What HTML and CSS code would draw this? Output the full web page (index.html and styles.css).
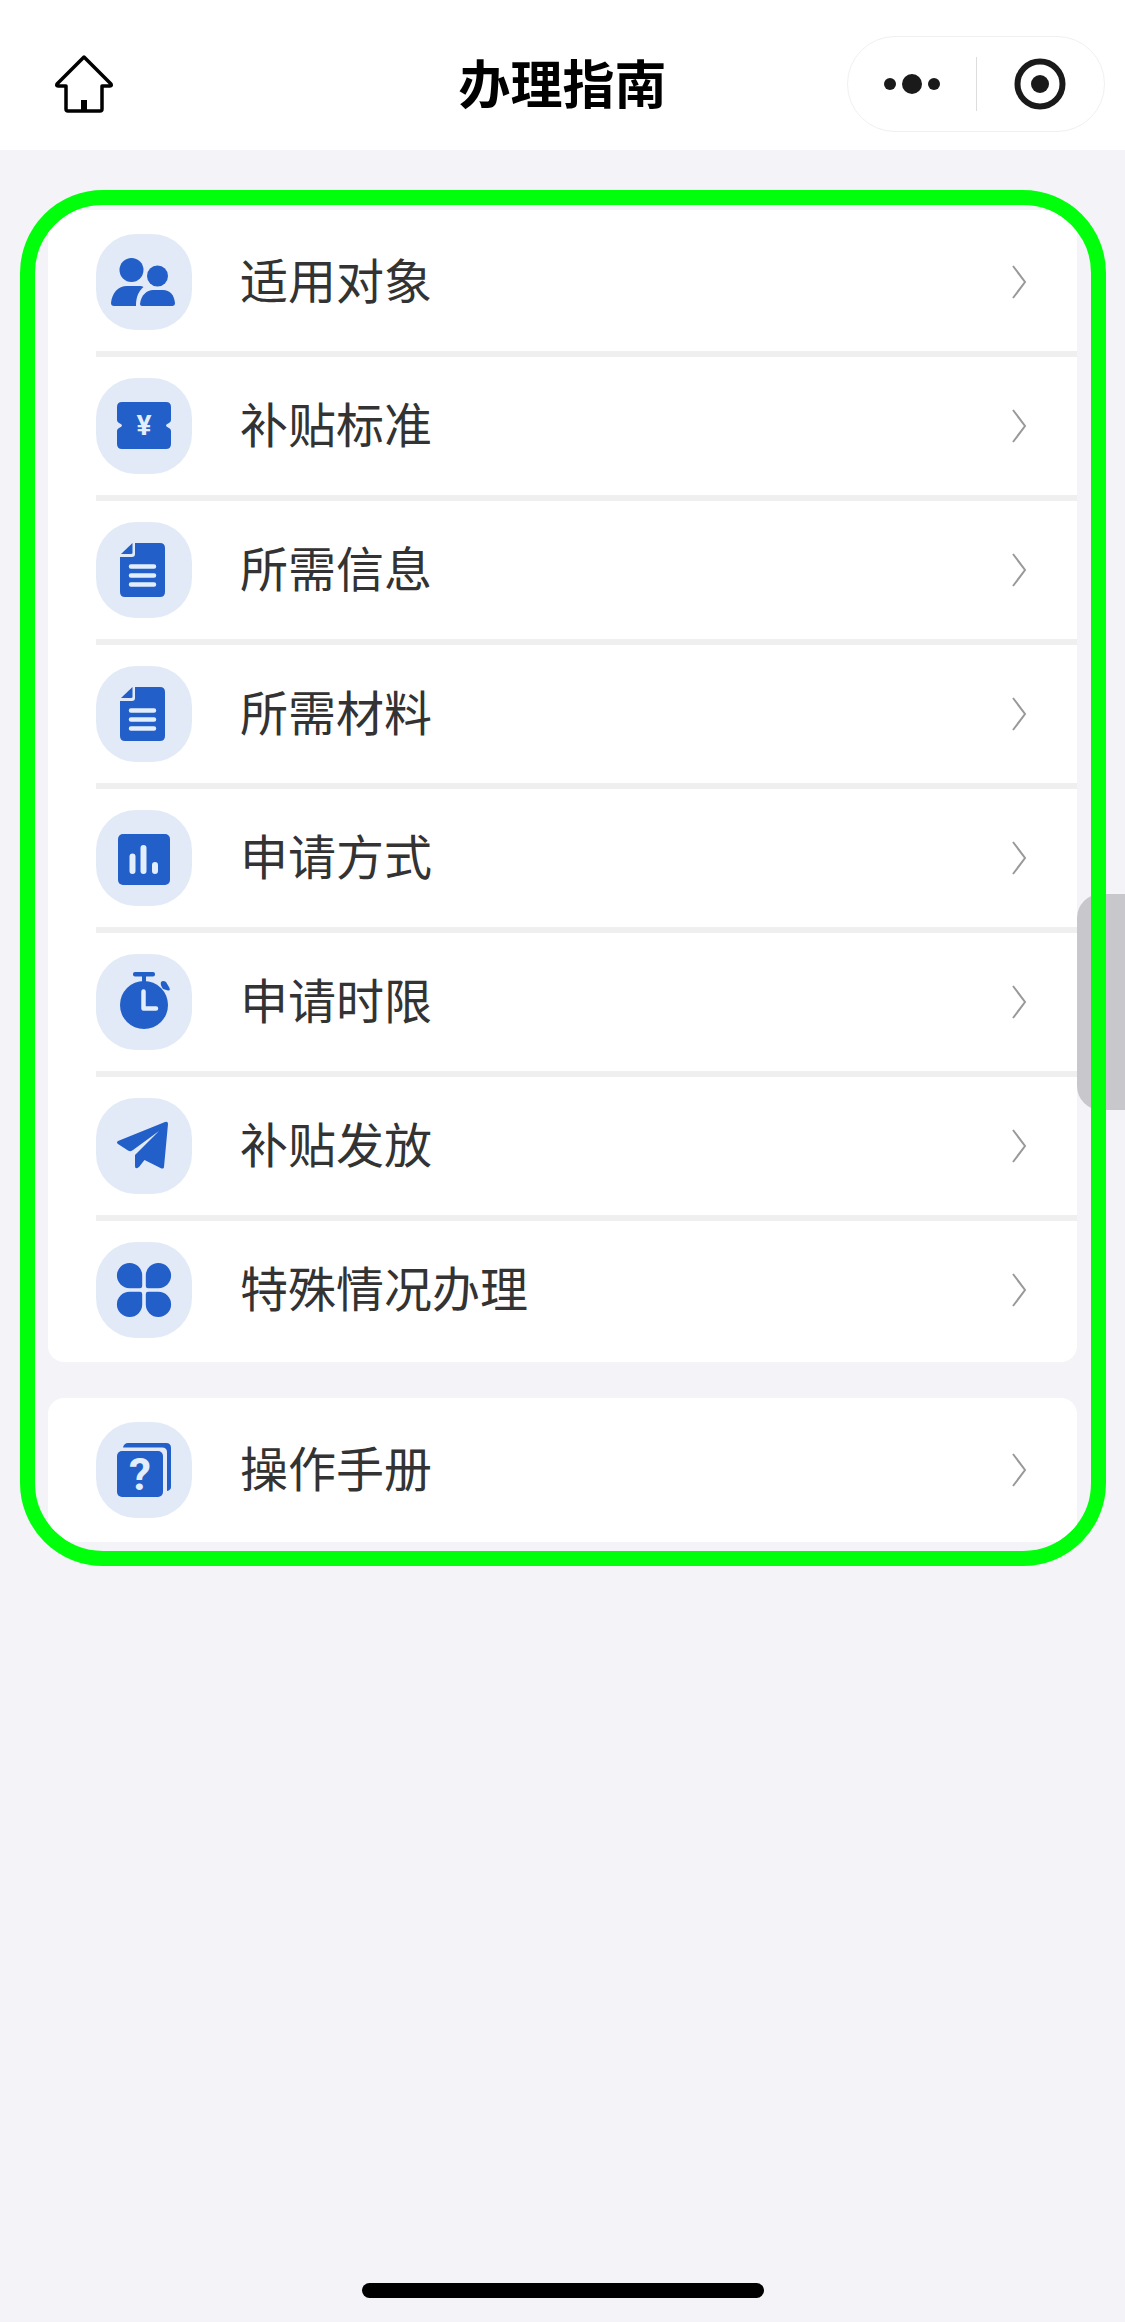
FILE: index.html
```html
<!DOCTYPE html>
<html lang="zh-CN">
<head>
    <meta charset="UTF-8">
    <meta name="viewport" content="width=device-width, initial-scale=1.0">
    <title>办理指南</title>
    <link rel="stylesheet" href="styles.css">
</head>
<body>

<header class="navbar">
    <a class="home" href="#" aria-label="首页">
        <svg width="60" height="60" viewBox="0 0 60 60" fill="none" stroke="#000" stroke-width="3.5" stroke-linejoin="round">
            <path d="M30 3L57 30Q58 32 56 32H48V55Q48 57 46 57H14Q12 57 12 55V32H4Q2 32 3 30Z"/>
            <path d="M30 46V57" stroke-width="6"/>
        </svg>
    </a>
    <h1>办理指南</h1>
    <div class="capsule">
        <button type="button" aria-label="更多">
            <svg width="60" height="60" viewBox="0 0 60 60" fill="#1a1a1a">
                <circle cx="8" cy="30" r="6"/>
                <circle cx="30" cy="30" r="10"/>
                <circle cx="52" cy="30" r="6"/>
            </svg>
        </button>
        <button type="button" aria-label="关闭">
            <svg width="60" height="60" viewBox="0 0 60 60">
                <circle cx="30" cy="30" r="22.5" fill="none" stroke="#1a1a1a" stroke-width="6"/>
                <circle cx="30" cy="30" r="9" fill="#1a1a1a"/>
            </svg>
        </button>
    </div>
</header>

<main class="guide">
    <nav class="card">
        <a class="row" href="#">
            <svg class="icon" viewBox="0 0 96 96">
                <circle cx="35.5" cy="36" r="12"/>
                <circle cx="61.5" cy="42" r="10.5"/>
                <path d="M18 72Q15 72 15 69C16 59 22 52 31 52H44Q46 52 47.5 53C43 57 40 62 40 72Z"/>
                <path d="M46 72Q44 72 44 70C45 61 51 56 57 56H67C74 56 78 61 79 69Q79 72 76 72Z"/>
            </svg>
            <span class="label">适用对象</span>
            <svg class="arrow" viewBox="0 0 16 34"><path d="M2 1L14 17L2 33"/></svg>
        </a>
        <a class="row" href="#">
            <svg class="icon" viewBox="0 0 96 96">
                <path d="M26 24H70Q75 24 75 29V42Q75 44 73 45Q67 47.5 73 50Q75 51 75 53V66Q75 71 70 71H26Q21 71 21 66V53Q21 51 23 50Q29 47.5 23 45Q21 44 21 42V29Q21 24 26 24Z"/>
                <text class="sign" x="48" y="57" font-size="28">¥</text>
            </svg>
            <span class="label">补贴标准</span>
            <svg class="arrow" viewBox="0 0 16 34"><path d="M2 1L14 17L2 33"/></svg>
        </a>
        <a class="row" href="#">
            <svg class="icon" viewBox="0 0 96 96">
                <path d="M39 21H64Q69 21 69 26V70Q69 75 64 75H29Q24 75 24 70V35H36Q39 35 39 32Z"/>
                <path d="M36.5 21V31Q36.5 32 35 32H25Z"/>
                <path class="line" d="M35 44.5H58M35 53.5H58M35 62.5H58"/>
            </svg>
            <span class="label">所需信息</span>
            <svg class="arrow" viewBox="0 0 16 34"><path d="M2 1L14 17L2 33"/></svg>
        </a>
        <a class="row" href="#">
            <svg class="icon" viewBox="0 0 96 96">
                <path d="M39 21H64Q69 21 69 26V70Q69 75 64 75H29Q24 75 24 70V35H36Q39 35 39 32Z"/>
                <path d="M36.5 21V31Q36.5 32 35 32H25Z"/>
                <path class="line" d="M35 44.5H58M35 53.5H58M35 62.5H58"/>
            </svg>
            <span class="label">所需材料</span>
            <svg class="arrow" viewBox="0 0 16 34"><path d="M2 1L14 17L2 33"/></svg>
        </a>
        <a class="row" href="#">
            <svg class="icon" viewBox="0 0 96 96">
                <rect x="22" y="24" width="52" height="51" rx="5"/>
                <path class="line thick" d="M36.5 46.5V61M47.5 38V61M59 55V61"/>
            </svg>
            <span class="label">申请方式</span>
            <svg class="arrow" viewBox="0 0 16 34"><path d="M2 1L14 17L2 33"/></svg>
        </a>
        <a class="row" href="#">
            <svg class="icon" viewBox="0 0 96 96">
                <circle cx="48" cy="51" r="24"/>
                <rect x="37" y="18" width="22" height="4.5" rx="2"/>
                <rect x="46" y="20" width="4" height="9"/>
                <path d="M65 28Q67 26 70 28L73 33Q75 37 72 36.500L67 35Q64 31 65 28Z"/>
                <path class="line" d="M47.5 37.5V54.5H60"/>
            </svg>
            <span class="label">申请时限</span>
            <svg class="arrow" viewBox="0 0 16 34"><path d="M2 1L14 17L2 33"/></svg>
        </a>
        <a class="row" href="#">
            <svg class="icon" viewBox="0 0 96 96">
                <path d="M22 43L69 24Q72 23 72 26L68 69Q68 71 65.5 70.5L48.5 62L43 69Q39 72 39 68V57L63 33L37 52Q35 54 32 52.5L22 46Q20 44.5 22 43Z"/>
            </svg>
            <span class="label">补贴发放</span>
            <svg class="arrow" viewBox="0 0 16 34"><path d="M2 1L14 17L2 33"/></svg>
        </a>
        <a class="row" href="#">
            <svg class="icon" viewBox="0 0 96 96">
                <path d="M33.5 21A12.5 12.5 0 0 1 46.2 33.5V44Q46.2 46.2 44 46.2H33.5A12.5 12.5 0 0 1 33.5 21Z"/>
                <path d="M62.5 21A12.5 12.5 0 0 0 49.8 33.5V44Q49.8 46.2 52 46.2H62.5A12.5 12.5 0 0 0 62.5 21Z"/>
                <path d="M33.5 75A12.5 12.5 0 0 0 46.2 62.5V52Q46.2 49.8 44 49.8H33.5A12.5 12.5 0 0 0 33.5 75Z"/>
                <path d="M62.5 75A12.5 12.5 0 0 1 49.8 62.5V52Q49.8 49.8 52 49.8H62.5A12.5 12.5 0 0 1 62.5 75Z"/>
            </svg>
            <span class="label">特殊情况办理</span>
            <svg class="arrow" viewBox="0 0 16 34"><path d="M2 1L14 17L2 33"/></svg>
        </a>
    </nav>

    <nav class="card">
        <a class="row" href="#">
            <svg class="icon" viewBox="0 0 96 96">
                <path d="M27 25.5Q28 21 32 21H70Q75 21 75 26V65Q75 68 71 69V30Q71 25.5 66 25.5Z"/>
                <rect x="21" y="29" width="46" height="46" rx="5"/>
                <text class="sign" x="44" y="68" font-size="44">?</text>
            </svg>
            <span class="label">操作手册</span>
            <svg class="arrow" viewBox="0 0 16 34"><path d="M2 1L14 17L2 33"/></svg>
        </a>
    </nav>
</main>

<button type="button" class="side-handle" aria-label="展开"></button>
<div class="home-indicator"></div>

</body>
</html>
```
FILE: styles.css
```css
* {
    box-sizing: border-box;
}
body {
    font-family: "Noto Sans CJK SC", sans-serif;
    background-color: #f4f3f8;
    display: flex;
    flex-direction: column;
    min-height: 100vh;
    margin: 0;
    position: relative;
}
.navbar {
    display: grid;
    grid-template-columns: 1fr auto 1fr;
    align-items: center;
    height: 150px;
    padding: 18px 20px 0 54px;
    background: #fff;
}
.navbar h1 {
    margin: 0;
    padding: 0 34px 4px 0;
    font-size: 52px;
    line-height: 72px;
    font-weight: 700;
    color: #000;
}
.home {
    display: flex;
}
.capsule {
    display: flex;
    justify-self: end;
    width: 258px;
    height: 96px;
    padding: 20px 0;
    border: 1px solid #f0f0f0;
    border-radius: 48px;
}
.capsule button {
    flex: 1;
    display: flex;
    align-items: center;
    justify-content: center;
    padding: 0;
    border: none;
    background: none;
    cursor: pointer;
}
.capsule button + button {
    border-left: 1px solid #ddd;
}
/* green highlight round the whole menu */
.guide {
    position: relative;
    z-index: 1;
    display: flex;
    flex-direction: column;
    gap: 36px;
    margin: 40px 19px 40px 20px;
    padding: 5px 14px 9px 13px;
    border: 15px solid #00ff0a;
    border-radius: 83px;
    overflow: hidden;
}
.card {
    padding: 3px 0 3px 48px;
    background: #fff;
    border-radius: 16px;
}
.row {
    display: flex;
    align-items: center;
    gap: 48px;
    height: 144px;
    padding-right: 50px;
    border-bottom: 6px solid #efefef;
    color: #333;
    text-decoration: none;
}
.row:last-child {
    height: 138px;
    border-bottom: none;
}
.label {
    flex: 1;
    padding-bottom: 8px;
    font-size: 48px;
    line-height: 72px;
}
.icon {
    width: 96px;
    height: 96px;
    border-radius: 40px;
    background: #e2eaf7;
    fill: #235fc8;
}
.icon .line {
    fill: none;
    stroke: #e2eefb;
    stroke-width: 4.5;
    stroke-linecap: round;
    stroke-linejoin: round;
}
.icon .thick {
    stroke-width: 6;
}
.icon .sign {
    fill: #e2eefb;
    font-family: Roboto, sans-serif;
    font-weight: 700;
    text-anchor: middle;
}
.arrow {
    width: 16px;
    height: 34px;
    fill: none;
    stroke: #999;
    stroke-width: 2;
}
.side-handle {
    position: absolute;
    top: 894px;
    right: 0;
    width: 48px;
    height: 216px;
    border: none;
    border-radius: 24px 0 0 24px;
    background: #c8c7cb;
}
.home-indicator {
    width: 402px;
    height: 15px;
    margin: auto auto 24px;
    border-radius: 8px;
    background: #000;
}
```
